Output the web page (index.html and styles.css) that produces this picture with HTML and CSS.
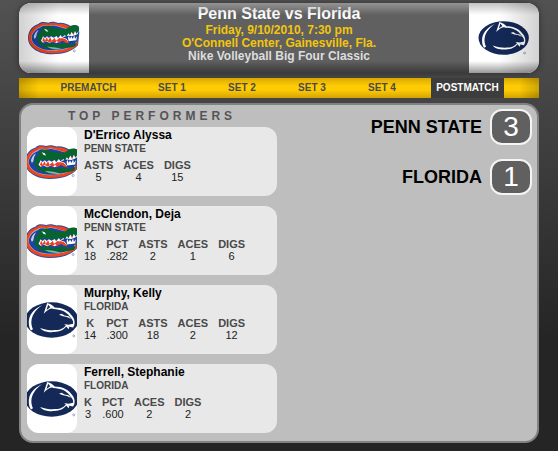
FILE: index.html
```
<!DOCTYPE html>
<html lang="en">
<head>
    <meta charset="UTF-8">
    <meta name="viewport" content="width=device-width, initial-scale=1.0">
    <title>Penn State vs Florida</title>
    <link rel="stylesheet" href="styles.css">
</head>
<body>
    <!-- team logos, reused below -->
    <svg class="defs" aria-hidden="true">
        <symbol id="gator" viewBox="0 0 156 100">
            <path fill="#2b4f9e" d="M0 50C0 27 15 12 31 8C39-1 51 2 61 4C72-1 82 2 91 5C106 3 118 9 128 14L151 13L154 34L150 72C135 89 108 99 72 99C30 99 0 78 0 50Z"/>
            <path fill="#f4421b" d="M2 50C3 29 17 15 33 10C41 2 51 5 61 7C71 2 82 5 91 8C105 6 116 11 126 17L148 57L149 71C134 87 106 96 72 96C31 96 2 76 2 50Z"/>
            <path fill="#b9c4e2" d="M10 50C10 35 22 21 37 16C45 10 52 12 61 14C72 9 82 12 93 15L124 24L146 66C129 80 104 88 73 88C37 88 10 72 10 50Z"/>
            <path fill="#1c45a0" d="M11 50C11 36 23 23 38 18C45 12 52 13 61 15C72 10 82 13 93 16L124 25L144 66C129 78 104 87 73 87C38 87 11 71 11 50Z"/>
            <path fill="#c5d0e8" d="M17 46Q21 31 32 25Q25 35 24 48L20 53Z"/>
            <path fill="#07642f" d="M28 54C27 39 34 35 40 30C37 20 44 15 54 18C61 11 71 14 74 22C86 18 100 25 111 24C121 21 124 12 138 11C149 10 155 17 153 25L149 35L129 35L119 44L98 42L86 46L60 43L43 46L38 59L48 69L66 65L85 70L112 66L130 71L147 64L142 75C118 83 100 78 80 82C52 84 31 72 28 54Z"/>
            <path fill="#fff" d="M48 22L57 25L61 31L54 30Z"/>
            <path fill="#fff" d="M41 54L45 45L51 50L57 45L63 50L69 45L77 49L86 44L90 51L98 41L102 48L111 41L115 47L121 36L126 42L131 31L136 42L141 29L146 38L152 28L149 38L129 48L119 63L105 57L85 65L74 60L65 65L54 60L45 64L39 58Z"/>
            <path fill="#ef3e22" d="M43 59L47 48L51 58L57 47L60 58L67 48L71 58L80 50L84 58L94 50L105 53L115 56L119 62L101 58L94 65L87 59L79 65L73 59L66 64L57 59L49 62Z"/>
            <path fill="#173f98" d="M103 48L120 43L133 44L149 40L146 61L125 66L115 52Z"/>
            <path fill="#ef3e22" d="M98 51Q111 48 118 60L124 66L112 64Z"/>
            <path fill="#fff" d="M120 49L123 44L126 53L130 45L134 53L139 42L141 53L147 44L145 57L122 60Z"/>
            <path fill="#86b6a0" d="M57 76Q79 75 105 84Q76 87 57 76Z"/>
            <circle cx="139" cy="89" r="3" fill="none" stroke="#7185b9" stroke-width="2"/>
        </symbol>
        <symbol id="lion" viewBox="0 0 156 104">
            <ellipse cx="77" cy="52" rx="77" ry="51" fill="#142957"/>
            <!-- back of the neck -->
            <path fill="#fff" d="M50 9C24 21 10 39 11 61C11 69 13 76 17 82L23 79C16 63 17 47 26 33C32 24 39 16 50 9Z"/>
            <!-- ear -->
            <path fill="#fff" d="M54 34L64 3C72 5 82 9 88 20L77 19C69 20 62 26 54 34ZM62 23L73 15L67 8Z"/>
            <!-- brow, nose and muzzle -->
            <path fill="#fff" d="M79 16C105 14 125 24 133 37C141 45 146 56 142 68L139 74L121 70L113 64L126 66L139 63C140 56 137 51 133 47L127 39C120 29 104 21 81 20Z"/>
            <path fill="#fff" d="M98 37L106 34L114 39L126 41L133 49L121 43L110 41L104 39Z"/>
            <!-- jaw -->
            <path fill="#fff" d="M44 75C61 82 77 82 94 81C108 79 115 72 120 65L128 73L126 79L119 71C111 81 102 86 83 87C65 88 49 84 44 75Z"/>
            <circle cx="141" cy="98" r="3" fill="none" stroke="#7f89a5" stroke-width="2"/>
        </symbol>
    </svg>

    <header class="match">
        <div class="match-logo"><svg class="logo" role="img" aria-label="Florida"><use href="#gator"/></svg></div>
        <div class="match-info">
            <h1>Penn State vs Florida</h1>
            <p>Friday, 9/10/2010, 7:30 pm</p>
            <p>O'Connell Center, Gainesville, Fla.</p>
            <p class="event">Nike Volleyball Big Four Classic</p>
        </div>
        <div class="match-logo"><svg class="logo" role="img" aria-label="Penn State"><use href="#lion"/></svg></div>
    </header>

    <nav class="tabs">
        <a class="wide" href="#prematch">PREMATCH</a>
        <a href="#set1">SET 1</a>
        <a href="#set2">SET 2</a>
        <a href="#set3">SET 3</a>
        <a href="#set4">SET 4</a>
        <a class="active" href="#postmatch">POSTMATCH</a>
    </nav>

    <main class="panel">
        <section class="performers">
            <h2>TOP PERFORMERS</h2>

            <article class="player">
                <div class="player-logo"><svg class="logo"><use href="#gator"/></svg></div>
                <div class="player-info">
                    <h3>D'Errico Alyssa</h3>
                    <p>PENN STATE</p>
                    <table>
                        <tr><th>ASTS</th><th>ACES</th><th>DIGS</th></tr>
                        <tr><td>5</td><td>4</td><td>15</td></tr>
                    </table>
                </div>
            </article>

            <article class="player">
                <div class="player-logo"><svg class="logo"><use href="#gator"/></svg></div>
                <div class="player-info">
                    <h3>McClendon, Deja</h3>
                    <p>PENN STATE</p>
                    <table>
                        <tr><th>K</th><th>PCT</th><th>ASTS</th><th>ACES</th><th>DIGS</th></tr>
                        <tr><td>18</td><td>.282</td><td>2</td><td>1</td><td>6</td></tr>
                    </table>
                </div>
            </article>

            <article class="player">
                <div class="player-logo"><svg class="logo"><use href="#lion"/></svg></div>
                <div class="player-info">
                    <h3>Murphy, Kelly</h3>
                    <p>FLORIDA</p>
                    <table>
                        <tr><th>K</th><th>PCT</th><th>ASTS</th><th>ACES</th><th>DIGS</th></tr>
                        <tr><td>14</td><td>.300</td><td>18</td><td>2</td><td>12</td></tr>
                    </table>
                </div>
            </article>

            <article class="player">
                <div class="player-logo"><svg class="logo"><use href="#lion"/></svg></div>
                <div class="player-info">
                    <h3>Ferrell, Stephanie</h3>
                    <p>FLORIDA</p>
                    <table>
                        <tr><th>K</th><th>PCT</th><th>ACES</th><th>DIGS</th></tr>
                        <tr><td>3</td><td>.600</td><td>2</td><td>2</td></tr>
                    </table>
                </div>
            </article>
        </section>

        <section class="scores">
            <div class="score"><span>PENN STATE</span><b>3</b></div>
            <div class="score"><span>FLORIDA</span><b>1</b></div>
        </section>
    </main>
</body>
</html>
```
FILE: styles.css
```
* {
    box-sizing: border-box;
}
html {
    min-height: 100%;
    background: linear-gradient(#525252, #252525 75%);
}
body {
    margin: 0;
    padding: 3px 19px 8px;
    font-family: "Liberation Sans", Arial, sans-serif;
}
h1, h2, h3, p {
    margin: 0;
}
.defs {
    position: absolute;
    width: 0;
    height: 0;
}

/* header */
.match {
    position: relative;
    display: flex;
    height: 70px;
    border-radius: 12px;
    overflow: hidden;
    background: #606060;
    box-shadow: 0 0 6px rgba(0,0,0,0.4);
}
.match::after {
    content: "";
    position: absolute;
    inset: 0;
    border-radius: 12px;
    background:
        linear-gradient(to right, rgba(0,0,0,0.18), transparent 40px),
        linear-gradient(to left, rgba(0,0,0,0.18), transparent 40px),
        linear-gradient(rgba(170,170,170,0.7), transparent 12px),
        linear-gradient(to top, rgba(0,0,0,0.4), transparent 12px);
    pointer-events: none;
}
.match-logo {
    display: flex;
    align-items: center;
    justify-content: center;
    width: 70px;
    background: #fff;
}
.match-logo .logo {
    width: 52px;
    height: 34px;
}
.match-info {
    flex: 1;
    padding-top: 1px;
    text-align: center;
    font-size: 12px;
    font-weight: bold;
    line-height: 13px;
    color: #f3c60c;
}
.match-info h1 {
    font-size: 16px;
    line-height: 20px;
    color: #fff;
}
.match-info .event {
    color: #ddd;
}

/* tabs */
.tabs {
    display: flex;
    justify-content: center;
    margin-top: 5px;
    padding: 0 35px 0 21px;
    background:
        linear-gradient(to right, rgba(0,0,0,0.2), transparent 20px),
        linear-gradient(to left, rgba(0,0,0,0.2), transparent 20px),
        linear-gradient(#dba900, #fecb05 8px, #fecb05 12px, #d4a300);
}
.tabs a {
    width: 70px;
    font-size: 10px;
    font-weight: bold;
    line-height: 20px;
    text-align: center;
    text-decoration: none;
    color: #4a4a4a;
}
.tabs .wide {
    width: 97px;
}
.tabs .active {
    width: 73px;
    margin-left: 14px;
    background: #3d3d3d;
    color: #fff;
}

/* main panel */
.panel {
    display: flex;
    justify-content: space-between;
    margin-top: 5px;
    padding: 4px 5px 8px 6px;
    border: 2px solid #828282;
    border-radius: 14px;
    background: #bebebe;
}
.performers {
    width: 250px;
}
.performers h2 {
    font-size: 12px;
    line-height: 14px;
    letter-spacing: 4px;
    text-align: center;
    color: #555;
    margin-bottom: 4px;
}
.player {
    display: flex;
    height: 69px;
    margin-bottom: 10px;
    border-radius: 12px;
    overflow: hidden;
    background: #e8e8e8;
}
.player:last-child {
    margin-bottom: 0;
}
.player-logo {
    display: flex;
    align-items: center;
    justify-content: center;
    flex: none;
    width: 50px;
    border-radius: 10px;
    overflow: hidden;
    background: #fff;
}
.player-logo .logo {
    flex: none;
    width: 54px;
    height: 36px;
}
.player-info {
    padding: 1px 0 0 7px;
}
.player-info h3 {
    font-size: 12px;
    line-height: 15px;
    color: #000;
}
.player-info p {
    font-size: 10px;
    font-weight: bold;
    line-height: 12px;
    color: #4a4a4a;
}
.player-info table {
    margin-top: 4px;
    border-collapse: collapse;
    font-size: 11px;
    line-height: 12px;
    text-align: center;
    color: #222;
}
.player-info th,
.player-info td {
    padding: 0 10px 0 0;
}
.player-info th {
    color: #4a4a4a;
}

/* set scores */
.score {
    display: flex;
    align-items: center;
    justify-content: flex-end;
    margin-bottom: 14px;
    font-size: 18px;
    font-weight: bold;
    color: #000;
}
.score b {
    width: 42px;
    margin-left: 8px;
    border: 2px solid #f4f4f4;
    border-radius: 12px;
    background: #606060;
    font-size: 28px;
    font-weight: normal;
    line-height: 32px;
    text-align: center;
    color: #fff;
}
```
